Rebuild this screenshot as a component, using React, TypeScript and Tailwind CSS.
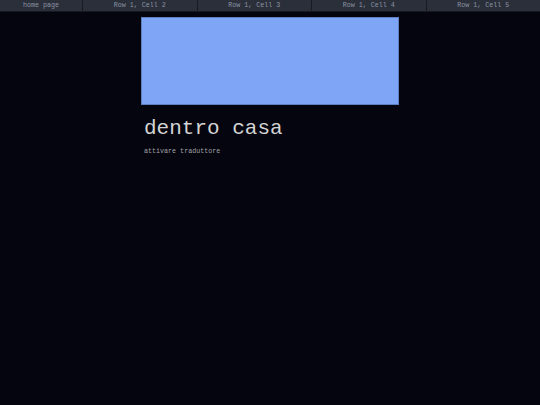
export default function App() {
  const cells = ["home page", "Row 1, Cell 2", "Row 1, Cell 3", "Row 1, Cell 4", "Row 1, Cell 5"];

  return (
    <div className="min-h-[405px] bg-[#05050f] font-['Liberation_Mono',monospace]">
      {/* top row */}
      <div className="grid h-[12px] grid-cols-[82px_1fr_1fr_1fr_1fr] border-b border-[#15181f] bg-[#2a2f3a]">
        {cells.map((c, i) => (
          <div
            key={i}
            className={`flex items-center justify-center text-[6.7px] leading-none text-[#8a93a3] ${
              i > 0 ? "border-l border-[#181b22]" : ""
            }`}
          >
            {c}
          </div>
        ))}
      </div>

      <div className="ml-[141px] w-[258px] pt-[5px]">
        <div className="h-[88px] border border-[#5f80c0] bg-[#7fa6f6]"></div>
        <div className="pl-[3px]">
          <h1 className="mt-[12px] text-[21px] leading-[24px] text-[#d4d4d4]">dentro casa</h1>
          <p className="mt-[7px] text-[6.7px] leading-none text-[#a0a0a4]">attivare traduttore</p>
        </div>
      </div>
    </div>
  );
}
